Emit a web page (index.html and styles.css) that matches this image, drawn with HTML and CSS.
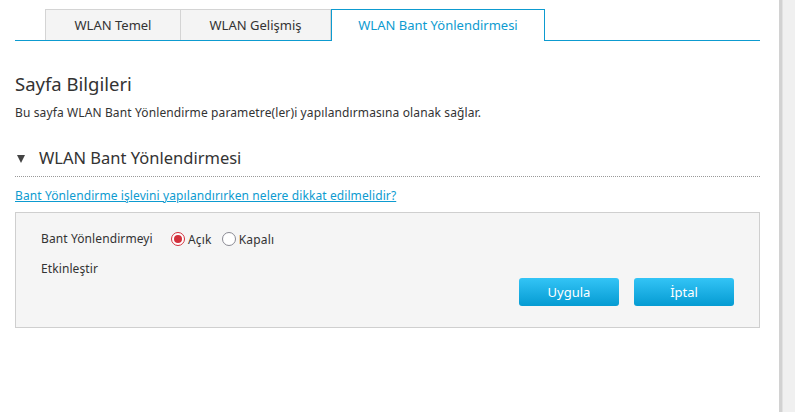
FILE: index.html
```html
<!DOCTYPE html>
<html lang="tr">
<head>
<meta charset="utf-8">
<title>WLAN Bant Yönlendirmesi</title>
<link rel="stylesheet" href="styles.css">
</head>
<body>
<div class="page">
  <div class="main">
    <div class="tabs">
      <div class="tab tab-1">WLAN Temel</div>
      <div class="tab tab-2">WLAN Gelişmiş</div>
      <div class="tab tab-3 active">WLAN Bant Yönlendirmesi</div>
    </div>
    <h1 class="title">Sayfa Bilgileri</h1>
    <p class="desc">Bu sayfa WLAN Bant Yönlendirme parametre(ler)i yapılandırmasına olanak sağlar.</p>
    <h2 class="section"><span class="arrow"></span>WLAN Bant Yönlendirmesi</h2>
    <a class="help" href="#">Bant Yönlendirme işlevini yapılandırırken nelere dikkat edilmelidir?</a>
    <div class="panel">
      <div class="row">
        <div class="label">Bant Yönlendirmeyi<br>Etkinleştir</div>
        <div class="radios">
          <span class="radio checked"></span><span class="rtext">Açık</span>
          <span class="radio"></span><span class="rtext">Kapalı</span>
        </div>
      </div>
      <div class="buttons">
        <button class="btn">Uygula</button>
        <button class="btn">İptal</button>
      </div>
    </div>
  </div>
  <div class="scroll"></div>
</div>
</body>
</html>
```
FILE: styles.css
```css
html, body {
  margin: 0;
  padding: 0;
  background: #fff;
}
body {
  font-family: "Noto Sans", "Open Sans", sans-serif;
  color: #333;
  font-size: 12px;
}
.page {
  display: flex;
  height: 412px;
  overflow: hidden;
}
.main {
  width: 745px;
  padding: 0 19px 0 15px;
}
.scroll {
  width: 13px;
  border-left: 3px solid #d2d2d2;
  background: #f0f0f0;
  box-shadow: inset 1px 0 0 #e2e2e2;
}
.tabs {
  display: flex;
  margin-top: 9px;
  padding-left: 30px;
  height: 31px;
  border-bottom: 1px solid #0d9bd0;
}
.tab {
  box-sizing: border-box;
  height: 31px;
  border: 1px solid #d4d4d4;
  border-bottom: none;
  background: #f4f4f4;
  font-size: 13px;
  line-height: 30px;
  text-align: center;
  color: #333;
}
.tab-1 { width: 136px; border-right: 1px solid #d4d4d4; }
.tab-2 { width: 150px; border-left: none; }
.tab-3 { width: 214px; }
.tab.active {
  background: #fff;
  border-color: #0d9bd0;
  height: 32px;
  color: #0d9bd0;
}
.title {
  margin: 30px 0 0;
  font-size: 18.5px;
  font-weight: normal;
  line-height: 26px;
  color: #333;
}
.desc {
  margin: 7px 0 0;
  font-size: 12px;
  letter-spacing: 0.12px;
  line-height: 18px;
}
.section {
  display: flex;
  align-items: center;
  margin: 24px 0 0;
  font-size: 16.5px;
  font-weight: normal;
  line-height: 24px;
  padding-bottom: 6px;
  border-bottom: 1px dotted #999;
}
.arrow {
  width: 0;
  height: 0;
  margin: 1px 14px 0 2px;
  border-left: 4.5px solid transparent;
  border-right: 4.5px solid transparent;
  border-top: 8px solid #444;
}
.help {
  display: block;
  margin-top: 10px;
  color: #0d9bd0;
  font-size: 12px;
  letter-spacing: 0.1px;
  line-height: 18px;
  width: max-content;
}
.panel {
  margin-top: 7px;
  height: 114px;
  background: #f5f5f5;
  border: 1px solid #cfcfcf;
}
.row {
  display: flex;
  padding: 11px 0 0 25px;
}
.label {
  width: 130px;
  line-height: 30px;
  letter-spacing: 0.1px;
}
.radios {
  display: flex;
  align-items: center;
  height: 20px;
  padding-top: 5px;
}
.radio {
  box-sizing: border-box;
  width: 14px;
  height: 14px;
  border-radius: 50%;
  border: 1px solid #8a8a94;
  background: #fff;
  margin-right: 3px;
  position: relative;
}
.radio.checked {
  border-color: #d2303c;
}
.radio.checked::after {
  content: "";
  position: absolute;
  left: 2px;
  top: 2px;
  width: 8px;
  height: 8px;
  border-radius: 50%;
  background: #d2303c;
}
.rtext {
  margin-right: 10px;
  letter-spacing: 0.2px;
}
.buttons {
  display: flex;
  justify-content: flex-end;
  gap: 15px;
  padding-right: 25px;
  margin-top: -6px;
}
.btn {
  width: 100px;
  height: 28px;
  border: none;
  border-radius: 3px;
  background: linear-gradient(#33c4f6, #059bd2);
  color: #fff;
  font-family: inherit;
  font-size: 13px;
  padding: 0;
}
```
